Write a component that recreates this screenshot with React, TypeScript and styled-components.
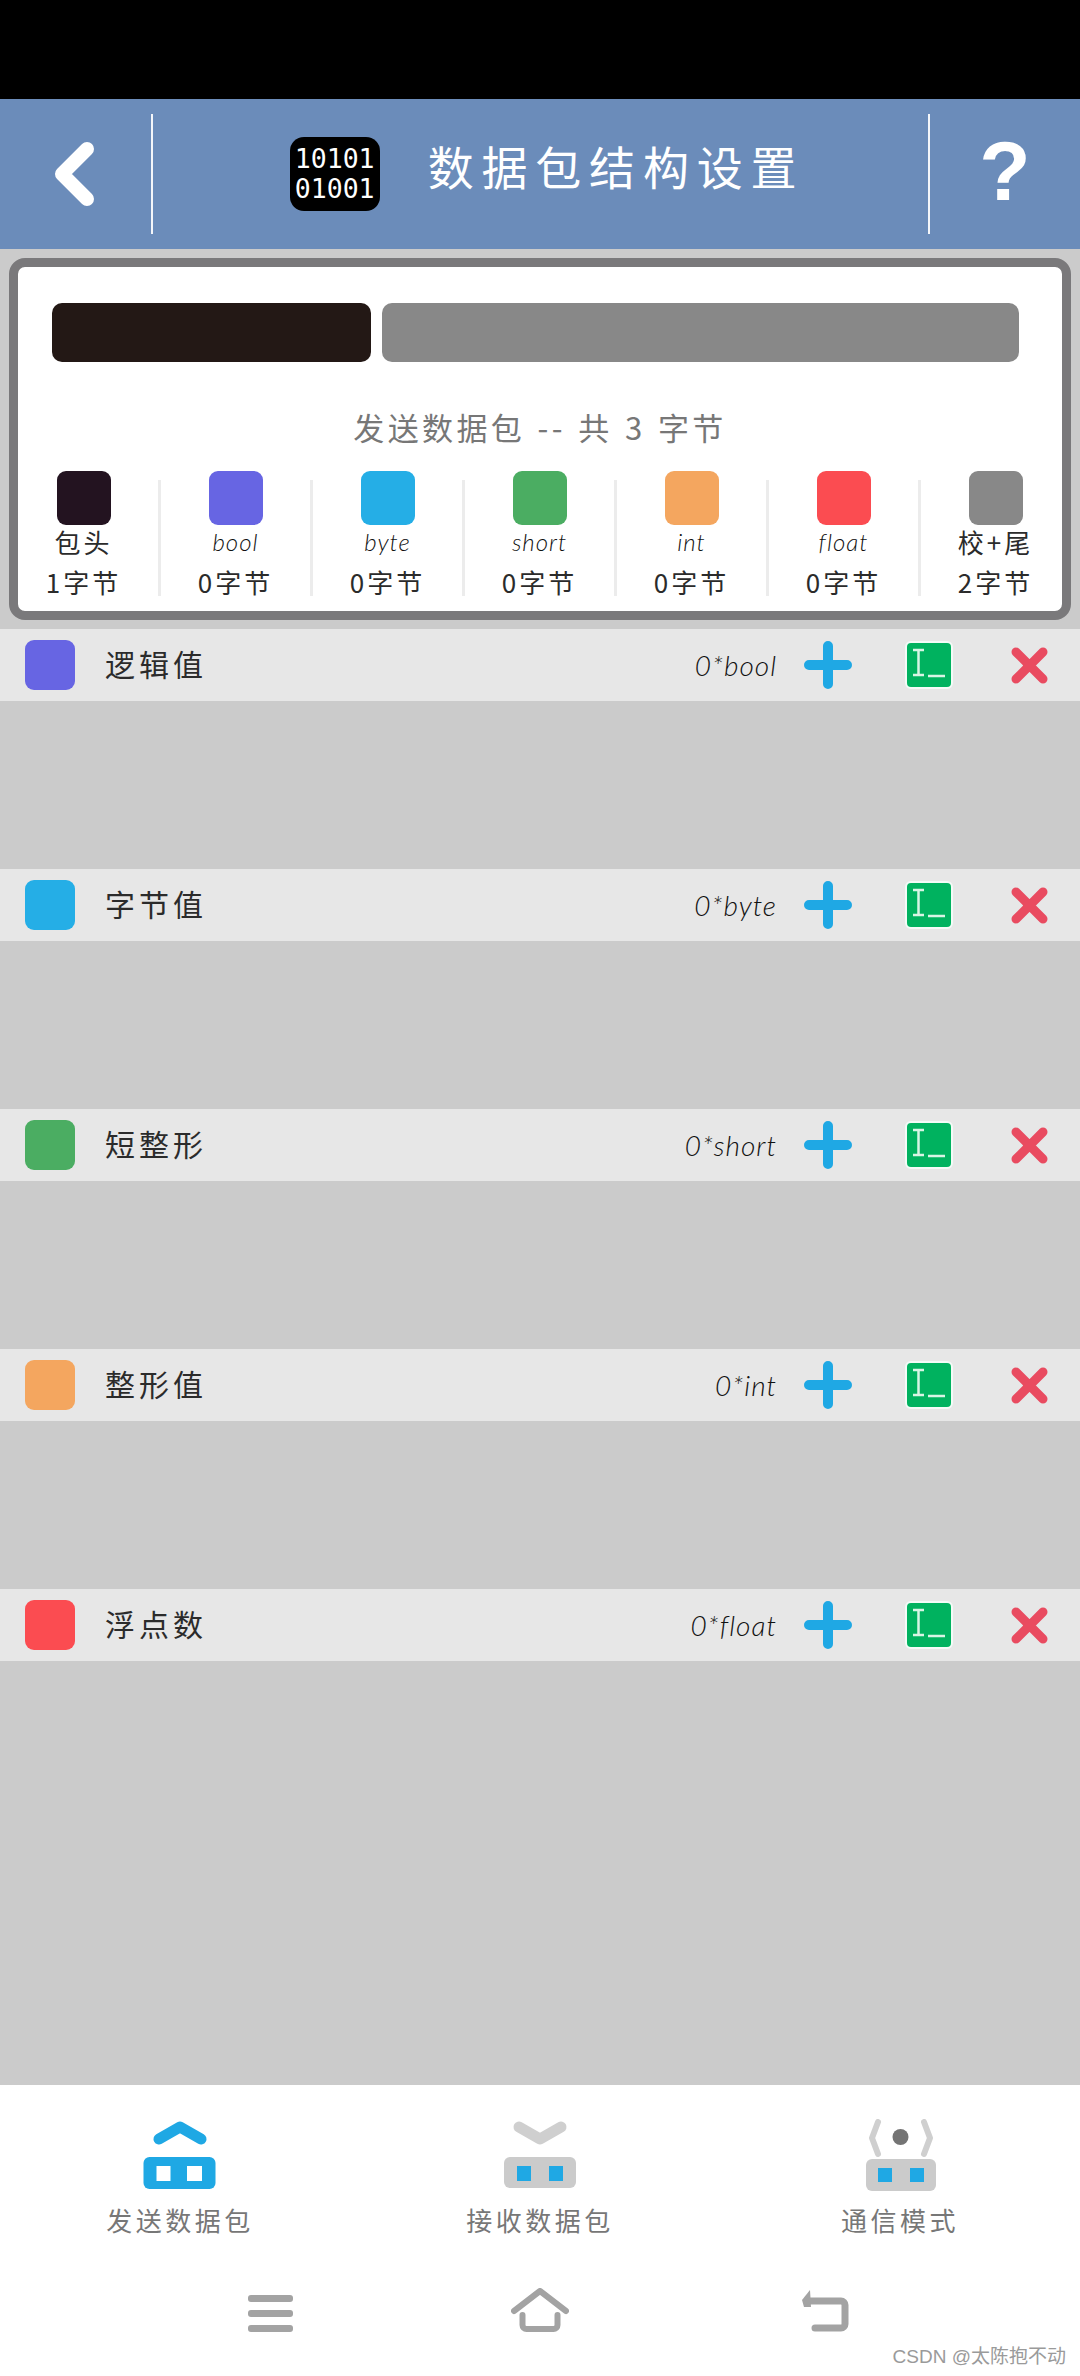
import React from 'react'
import styled, { createGlobalStyle } from 'styled-components';

const GlobalStyle = createGlobalStyle`
html, body {
  margin: 0;
  padding: 0;
  background: #cbcbcb;
}
* {
  box-sizing: border-box;
}
`;

const HAND = `"Noto Sans CJK SC", "Noto Sans", sans-serif`;
const LATIN = `Lato, "Noto Sans CJK SC", sans-serif`;

const BLUE = '#1fa8e4';
const ICON_GRAY = '#cbcbcb';

const Page = styled.div`
width: 1080px;
height: 2376px;
display: flex;
flex-direction: column;
overflow: hidden;
position: relative;
background: #cbcbcb;
font-family: ${HAND};
`;

const StatusBar = styled.div`
height: 99px;
background: #000;
`;

const Header = styled.header`
height: 150px;
display: flex;
align-items: center;
background: #6b8cba;
color: #fff;
`;

const BackCell = styled.div`
width: 151px;
padding-left: 54px;
display: flex;
align-items: center;
`;

const HeaderDivider = styled.div`
width: 2px;
height: 120px;
background: #f4f6fa;
`;

const TitleCell = styled.div`
flex: 1;
display: flex;
align-items: center;
justify-content: center;
gap: 48px;
padding-left: 13px;
`;

const BinaryBadge = styled.div`
width: 90px;
height: 74px;
border-radius: 14px;
background: #000;
display: flex;
flex-direction: column;
align-items: center;
justify-content: center;
font-family: "DejaVu Sans Mono", monospace;
font-size: 26.5px;
line-height: 30px;
color: #fff;
`;

const Title = styled.h1`
margin: 0 0 18px;
font-size: 46px;
font-weight: 400;
letter-spacing: 7.8px;
line-height: 60px;
`;

const HelpCell = styled.div`
width: 150px;
margin-bottom: 6px;
text-align: center;
font-family: "Liberation Sans", sans-serif;
font-size: 84px;
font-weight: 700;
line-height: 90px;
`;

const Main = styled.main`
flex: 1;
min-height: 0;
`;

const Panel = styled.section`
margin: 9px 9px 9px;
height: 362px;
border: 9px solid #7a797b;
border-radius: 16px;
background: #fff;
`;

const BarRow = styled.div`
display: flex;
gap: 11px;
height: 59px;
margin: 36px 43px 0 34px;
`;

const Bar = styled.div<{ $grow: number; $color: string }>`
flex: ${({ $grow }) => $grow};
border-radius: 10px;
background: ${({ $color }) => $color};
`;

const PanelHeading = styled.div`
margin-top: 45px;
height: 40px;
text-align: center;
font-size: 31px;
line-height: 40px;
letter-spacing: 3.4px;
word-spacing: 2px;
color: #777;
`;

const Legend = styled.div`
display: flex;
margin: 24px -9px 0;
`;

const LegendDivider = styled.div`
width: 3px;
height: 116px;
margin-top: 9px;
background: #ececec;
`;

const LegendCol = styled.div`
width: 149px;
display: flex;
flex-direction: column;
align-items: center;
color: #2b2b2b;
`;

const LegendSwatch = styled.div<{ $color: string }>`
width: 54px;
height: 54px;
border-radius: 9px;
background: ${({ $color }) => $color};
`;

const LegendName = styled.div<{ $latin: boolean }>`
height: 34px;
line-height: 34px;
font-family: ${({ $latin }) => ($latin ? LATIN : HAND)};
font-style: ${({ $latin }) => ($latin ? 'italic' : 'normal')};
font-weight: ${({ $latin }) => ($latin ? 300 : 400)};
color: ${({ $latin }) => ($latin ? '#111' : '#2b2b2b')};
font-size: ${({ $latin }) => ($latin ? '24px' : '26px')};
letter-spacing: ${({ $latin }) => ($latin ? '1px' : '3px')};
`;

const LegendBytes = styled.div`
margin-top: 4px;
line-height: 38px;
font-size: 26px;
letter-spacing: 3px;
`;

const Group = styled.div`
height: 240px;
`;

const Row = styled.div`
height: 72px;
display: flex;
align-items: center;
padding: 0 32px 0 25px;
background: #e7e7e7;
`;

const RowSwatch = styled.div<{ $color: string }>`
width: 50px;
height: 50px;
border-radius: 9px;
background: ${({ $color }) => $color};
`;

const RowLabel = styled.div`
margin: 0 0 5px 30px;
font-size: 30px;
letter-spacing: 4px;
color: #2b2b2b;
`;

const RowCount = styled.div`
margin-left: auto;
font-family: ${LATIN};
font-style: italic;
font-weight: 300;
font-size: 28px;
letter-spacing: 1px;
color: #111;
`;

const AddIcon = styled.svg`
margin-left: 27px;
width: 48px;
height: 48px;
`;

const EditBadge = styled.div`
margin-left: 53px;
width: 48px;
height: 48px;
border: 2px solid #f3fbf7;
border-radius: 6px;
background: #00b25f;
`;

const EditGlyph = styled.svg`
display: block;
width: 44px;
height: 44px;
`;

const RemoveIcon = styled.svg`
margin-left: 58px;
width: 37px;
height: 37px;
`;

const Bottom = styled.footer`
height: 291px;
background: #fff;
padding-top: 34px;
`;

const Tabs = styled.nav`
display: grid;
grid-template-columns: repeat(3, 360px);
`;

const Tab = styled.div`
display: flex;
flex-direction: column;
align-items: center;
`;

const TabIcon = styled.svg`
display: block;
width: 92px;
height: 72px;
`;

const TabLabel = styled.div`
margin-top: 11px;
font-size: 26px;
line-height: 36px;
letter-spacing: 3.5px;
color: #777;
`;

const SystemNav = styled.div`
display: grid;
grid-template-columns: 263px 290px auto;
justify-content: start;
padding: 50px 0 0 248px;
`;

const NavIcon = styled.svg`
display: block;
height: 44px;
`;

const Watermark = styled.div`
position: absolute;
right: 14px;
bottom: 7px;
font-family: "Liberation Sans", "Noto Sans CJK SC", sans-serif;
font-size: 19px;
line-height: 24px;
color: #9a9a9a;
`;

const legend = [
  { name: '包头', bytes: 1, color: '#231320', latin: false },
  { name: 'bool', bytes: 0, color: '#6765e3', latin: true },
  { name: 'byte', bytes: 0, color: '#25aee6', latin: true },
  { name: 'short', bytes: 0, color: '#4bad62', latin: true },
  { name: 'int', bytes: 0, color: '#f4a65f', latin: true },
  { name: 'float', bytes: 0, color: '#fb4c51', latin: true },
  { name: '校+尾', bytes: 2, color: '#888888', latin: false },
];

const fields = [
  { label: '逻辑值', type: 'bool', color: '#6765e3' },
  { label: '字节值', type: 'byte', color: '#25aee6' },
  { label: '短整形', type: 'short', color: '#4bad62' },
  { label: '整形值', type: 'int', color: '#f4a65f' },
  { label: '浮点数', type: 'float', color: '#fb4c51' },
];

function App() {
  return (
    <Page>
      <GlobalStyle />
      <StatusBar />
      <Header>
        <BackCell>
          <svg width="41" height="66" viewBox="0 0 41 66" fill="none" stroke="#fff" strokeWidth="14" strokeLinecap="round" strokeLinejoin="round">
            <polyline points="33,8 8,33 33,58" />
          </svg>
        </BackCell>
        <HeaderDivider />
        <TitleCell>
          <BinaryBadge>
            <div>10101</div>
            <div>01001</div>
          </BinaryBadge>
          <Title>数据包结构设置</Title>
        </TitleCell>
        <HeaderDivider />
        <HelpCell>?</HelpCell>
      </Header>
      <Main>
        <Panel>
          <BarRow>
            <Bar $grow={1} $color="#231815" />
            <Bar $grow={2} $color="#888888" />
          </BarRow>
          <PanelHeading>发送数据包 -- 共 3 字节</PanelHeading>
          <Legend>
            {legend.map((item, i) => (
              <React.Fragment key={item.name}>
                {i > 0 && <LegendDivider />}
                <LegendCol>
                  <LegendSwatch $color={item.color} />
                  <LegendName $latin={item.latin}>{item.name}</LegendName>
                  <LegendBytes>{item.bytes}字节</LegendBytes>
                </LegendCol>
              </React.Fragment>
            ))}
          </Legend>
        </Panel>
        {fields.map((field) => (
          <Group key={field.type}>
            <Row>
              <RowSwatch $color={field.color} />
              <RowLabel>{field.label}</RowLabel>
              <RowCount>0*{field.type}</RowCount>
              <AddIcon viewBox="0 0 48 48" fill="none" stroke={BLUE} strokeWidth="10" strokeLinecap="round">
                <path d="M24 5V43M5 24H43" />
              </AddIcon>
              <EditBadge>
                <EditGlyph viewBox="0 0 44 44" fill="none" stroke="#d8f5e5" strokeWidth="2.5">
                  <path d="M6 7H17M11.5 7V32M6 32H17M21 33H38" />
                </EditGlyph>
              </EditBadge>
              <RemoveIcon viewBox="0 0 37 37" fill="none" stroke="#e94b60" strokeWidth="9" strokeLinecap="round">
                <path d="M5 5L32 32M32 5L5 32" />
              </RemoveIcon>
            </Row>
          </Group>
        ))}
      </Main>
      <Bottom>
        <Tabs>
          <Tab>
            <TabIcon viewBox="0 0 92 72">
              <polyline points="25,20 46,8 67,20" fill="none" stroke={BLUE} strokeWidth="11" strokeLinecap="round" strokeLinejoin="round" />
              <rect x="9.5" y="38" width="72" height="32" rx="6" fill={BLUE} />
              <rect x="22.5" y="47" width="14" height="15" fill="#fff" />
              <rect x="53" y="47" width="15" height="15" fill="#fff" />
            </TabIcon>
            <TabLabel>发送数据包</TabLabel>
          </Tab>
          <Tab>
            <TabIcon viewBox="0 0 92 72">
              <polyline points="25,8 46,20 67,8" fill="none" stroke="#cfcfcf" strokeWidth="11" strokeLinecap="round" strokeLinejoin="round" />
              <rect x="10" y="38" width="72" height="31" rx="6" fill={ICON_GRAY} />
              <rect x="23" y="47" width="14" height="15" fill={BLUE} />
              <rect x="55" y="47" width="14" height="15" fill={BLUE} />
            </TabIcon>
            <TabLabel>接收数据包</TabLabel>
          </Tab>
          <Tab>
            <TabIcon viewBox="0 0 92 72">
              <polyline points="24,3 18,19 24,35" fill="none" stroke="#cfcfcf" strokeWidth="6" strokeLinecap="round" strokeLinejoin="round" />
              <polyline points="70,3 76,19 70,35" fill="none" stroke="#cfcfcf" strokeWidth="6" strokeLinecap="round" strokeLinejoin="round" />
              <ellipse cx="46.5" cy="18" rx="8" ry="8" fill="#747474" />
              <rect x="12" y="40" width="70" height="32" rx="6" fill={ICON_GRAY} />
              <rect x="24" y="49" width="14" height="14" fill={BLUE} />
              <rect x="56" y="49" width="14" height="14" fill={BLUE} />
            </TabIcon>
            <TabLabel>通信模式</TabLabel>
          </Tab>
        </Tabs>
        <SystemNav>
          <NavIcon viewBox="0 0 45 44" width="45" fill="#a3a3a3">
            <rect x="0" y="7" width="45" height="7" rx="3" />
            <rect x="0" y="22" width="45" height="7" rx="3" />
            <rect x="0" y="37" width="45" height="7" rx="3" />
          </NavIcon>
          <NavIcon viewBox="0 0 58 44" width="58" fill="none" stroke="#a3a3a3" strokeWidth="6" strokeLinecap="round" strokeLinejoin="round">
            <polyline points="3,23 29,3 55,23" />
            <path d="M11.5 27V37a4 4 0 0 0 4 4H42.5a4 4 0 0 0 4-4V27" />
          </NavIcon>
          <NavIcon viewBox="0 0 48 44" width="48" fill="none" stroke="#a3a3a3" strokeWidth="7" strokeLinecap="round" strokeLinejoin="round">
            <path d="M9 13H40a4 4 0 0 1 4 4V36a4 4 0 0 1-4 4H14" />
            <path d="M9 2L1 12L3 19H10Z" fill="#a3a3a3" stroke="none" />
          </NavIcon>
        </SystemNav>
      </Bottom>
      <Watermark>CSDN @太陈抱不动</Watermark>
    </Page>
  )
}

export default App
